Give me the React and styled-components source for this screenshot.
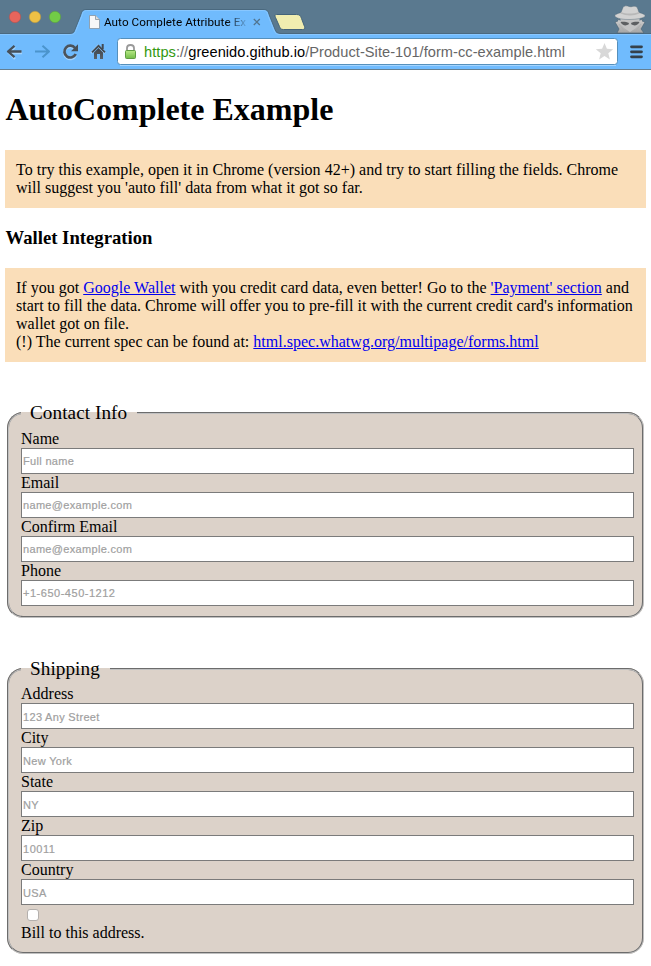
import React from "react";
import styled, { createGlobalStyle } from "styled-components";

const Global = createGlobalStyle`
  * { box-sizing: border-box; }
  html, body { margin: 0; background: #fff; }
  body { width: 651px; height: 966px; overflow: hidden; color: #000; font: 16px/18px "Liberation Serif", "Times New Roman", serif; }
`;

const BrowserBar = styled.header`
  position: relative;
  height: 70px;
  font-family: "Liberation Sans", Arial, sans-serif;
`;
const Artwork = styled.svg`
  position: absolute;
  inset: 0;
  display: block;
`;
const TabRow = styled.div`
  position: relative;
  height: 34px;
  padding: 13px 0 0 104px;
`;
const TabTitle = styled.div`
  width: 145px;
  height: 18px;
  overflow: hidden;
  white-space: nowrap;
  font: 11.7px/18px Roboto, "Liberation Sans", sans-serif;
  letter-spacing: 0.06px;
  mask-image: linear-gradient(90deg, #000 84%, transparent 100%);
`;
const AddressRow = styled.div`
  position: relative;
  height: 36px;
  padding: 8px 0 0 144px;
`;
const Url = styled.div`
  font-size: 14.6px;
  line-height: 20px;
  letter-spacing: 0.05px;
  white-space: nowrap;
  color: #666;
`;
const Secure = styled.span`color: #32980f;`;
const Host = styled.span`color: #000;`;

const Page = styled.main`padding: 0 5px;`;
const Title = styled.h1`
  margin: 0;
  padding: 21px 0 0 0.4px;
  height: 80px;
  font-size: 32px;
  line-height: 37px;
`;
const Note = styled.p`
  margin: 0;
  padding: 11px;
  height: ${(p) => p.$height}px;
  background: #fadeb9;
  white-space: nowrap;
  letter-spacing: 0.01px;
  a { color: #0000ee; text-decoration: underline; }
`;
const Subtitle = styled.h2`
  margin: 0;
  height: 60px;
  padding: 19px 0 0 0.5px;
  font-size: 18.72px;
  line-height: 22px;
`;
const Group = styled.fieldset`
  margin: 40px 2px 0;
  padding: ${(p) => p.$top}px 8px 10px 12px;
  height: ${(p) => p.$height}px;
  min-width: 0;
  border: 2px groove #c0c0c0;
  border-radius: 16px;
  background: #dcd2c9;
`;
const Legend = styled.legend`
  padding: 0 10px 0 9px;
  font-size: 19.2px;
  line-height: 22px;
  letter-spacing: 0.06px;
`;
const FieldLabel = styled.label`
  display: block;
  height: 18px;
`;
const Field = styled.input`
  display: block;
  width: 100%;
  height: 26px;
  margin: 0;
  padding: ${(p) => (p.$low ? "2px 1px 1px" : "0 1px 1px")};
  border: 1px solid #7b7b7b;
  border-radius: 0;
  background: #fff;
  font: 11px "Liberation Sans", Arial, sans-serif;
  letter-spacing: ${(p) => (/^[+\d]+[-\d]+$/.test(p.placeholder) ? 0.52 : 0.32)}px;
  &::placeholder { color: #a0a0a0; opacity: 1; -webkit-text-stroke: 0.2px #a0a0a0; }
`;
const Check = styled.input`
  appearance: none;
  display: block;
  width: 12px;
  height: 12px;
  margin: 4px 0 3px 6px;
  border: 1px solid #b4b0ad;
  border-radius: 3px;
  background: #fff;
`;

const CONTACT = [["Name", "Full name"], ["Email", "name@example.com"], ["Confirm Email", "name@example.com"], ["Phone", "+1-650-450-1212"]];
const SHIPPING = [["Address", "123 Any Street"], ["City", "New York"], ["State", "NY"], ["Zip", "10011"], ["Country", "USA"]];

function Fields({ items, low = false }) {
  return items.map(([label, hint]) => (
    <React.Fragment key={label}>
      <FieldLabel htmlFor={label}>{label}</FieldLabel>
      <Field id={label} placeholder={hint} $low={low} />
    </React.Fragment>
  ));
}

function BrowserArtwork() {
  return (
    <Artwork width="651" height="70" viewBox="0 0 651 70" aria-hidden="true">
      <defs>
        <linearGradient id="lock" x2="0" y2="1"><stop stopColor="#b8e986" /><stop offset="1" stopColor="#72bd48" /></linearGradient>
        <linearGradient id="coat" x2="0" y2="1"><stop stopColor="#d0d0d0" /><stop offset="1" stopColor="#a5a5a5" /></linearGradient>
        <linearGradient id="ink" x2="0" y2="1"><stop stopColor="#3d444b" /><stop offset="1" stopColor="#59626a" /></linearGradient>
      </defs>
      <path fill="#5a798f" d="M0 0h651v34H0z" />
      <path fill="#70bbfd" d="M0 34h651v35H0z" />
      <path fill="#70bbfd" d="M69 34c4 0 5-1 6-4l6-15c1-4 2-5 6-5h176c4 0 5 1 6 5l6 15c1 3 3 4 6 4z" />
      <path fill="none" stroke="#466479" strokeOpacity=".75" d="M0 33.5h69c4 0 5-1 6-4l6-15c1-4 2-5 6-5h176c4 0 5 1 6 5l6 15c1 3 3 4 6 4h370" />
      <path fill="none" stroke="#88c7ff" d="M0 34.5h70c4 0 5-1 6-4l6-15c1-4 2-5 6-5h174c4 0 5 1 6 5l6 15c1 3 3 4 6 4h371" />
      <path stroke="#657f91" d="M0 69.5h651" />
      <circle cx="15" cy="17" r="5.7" fill="#e6655c" stroke="#b65250" strokeWidth=".6" />
      <circle cx="35" cy="17" r="5.7" fill="#edc045" stroke="#b89a43" strokeWidth=".6" />
      <circle cx="55" cy="17" r="5.7" fill="#72cc46" stroke="#5a9d43" strokeWidth=".6" />
      <path fill="#f7f7f7" stroke="#8794a0" strokeWidth=".8" d="M89.5 15.5h6l4 4v9h-10z" />
      <path fill="#dedede" stroke="#8794a0" strokeWidth=".8" d="M95.5 15.5v4h4" />
      <path stroke="#51748f" strokeWidth="1.3" d="m253.8 19 6 6m0-6-6 6" />
      <path fill="#f0edb0" stroke="#43637a" d="M276.5 14.5h20c3 0 4 1 5 4l3 8c.8 2 0 3-2 3h-19c-3 0-3-1-4-3l-4-9c-1-2-.5-3 1-3z" />
      <path fill="none" stroke="#a2d3ff" strokeWidth="2.4" d="M22 53H9m6-6-6 6 6 6M75 49.5a6 6 0 1 0 .7 6M91 53l7-7 7 7" />
      <path fill="none" stroke="#45505a" strokeWidth="2.3" strokeLinejoin="round" d="M21.5 51.5H8.5m6-5.7L8 51.5l6.5 5.7" />
      <path fill="none" stroke="#4b94cc" strokeWidth="2" strokeLinejoin="round" d="M35 51.5h13.5m-6-5.7 6.5 5.7-6.5 5.7" />
      <path fill="none" stroke="#4b535b" strokeWidth="2.7" d="M75 48a5.9 5.9 0 1 0 .7 6" />
      <path fill="#45505a" d="M78 44.3v7h-7z" />
      <path fill="url(#ink)" d="M94 52.5 98.5 48l4.5 4.5V59h-3v-5h-3v5h-3z" />
      <path fill="none" stroke="#424a52" strokeWidth="1.9" d="m92 52.3 6.5-6.5 6.5 6.5" />
      <path fill="#424a52" d="M101.7 44h2v5h-2z" />
      <rect x="117.5" y="38.5" width="500" height="26" rx="3" fill="#fff" stroke="#5590bc" />
      <path stroke="#a5d5ff" d="M120 65.5h496" />
      <path fill="none" stroke="#999" strokeWidth="1.8" d="M127 51v-3c0-4 7-4 7 0v3" />
      <rect x="125.5" y="50.5" width="10" height="8" rx="1" fill="url(#lock)" stroke="#609d42" />
      <path fill="#d8d8d8" d="m604.5 43 2.4 5.8 6.3.4-4.9 4 1.6 6.2-5.4-3.4-5.4 3.4 1.6-6.2-4.9-4 6.3-.4z" />
      <path stroke="#35414b" strokeWidth="2.8" strokeLinecap="round" d="M631.5 46.8h10m-10 5h10m-10 5h10" />
      <path fill="url(#coat)" stroke="#465f70" strokeWidth=".6" d="m617 33 2-4-4-7 3-1-1-2 6 2h14l6-2-1 2 3 1-4 7 3 4z" />
      <path fill="#c3c3c3" d="M620 16h20l-1 8-3 4-6 4-6-4-3-4z" />
      <path fill="#d2d2d2" stroke="#4d6372" strokeWidth=".4" d="M615 16.5c-1-2 3-3 6-4l2-5c1-2 4-2 6-1 3 1 4-1 7 0 2 1 2 4 3 6 3 1 7 2 6 4-4 3.5-26 4.5-30 0z" />
      <path fill="#b8b8b8" d="M621 12c5 2 12 2 18 0l.5 1.5c-6 2.5-13 2.5-19 0z" />
      <path fill="#5d5f61" d="M620.5 22c3-.6 6 0 8.5 1l-.5 1.6-3 .8c-2 0-4-1-5-3.4zm10.5 1c2-1 5-1.6 8.5-1-1 2.4-3 3.4-5 3.4l-3-.8z" />
      <path fill="none" stroke="#aaa" strokeWidth=".7" d="m619 24 6 8m16-8-6 8" />
    </Artwork>
  );
}

export default function App() {
  return (
    <>
      <Global />
      <BrowserBar>
        <BrowserArtwork />
        <TabRow><TabTitle>Auto Complete Attribute Ex</TabTitle></TabRow>
        <AddressRow><Url><Secure>https</Secure>://<Host>greenido.github.io</Host>/Product-Site-101/form-cc-example.html</Url></AddressRow>
      </BrowserBar>
      <Page>
        <Title>AutoComplete Example</Title>
        <Note $height={58}>To try this example, open it in Chrome (version 42+) and try to start filling the fields. Chrome<br />will suggest you 'auto fill' data from what it got so far.</Note>
        <Subtitle>Wallet Integration</Subtitle>
        <Note $height={94}>If you got <a href="#wallet">Google Wallet</a> with you credit card data, even better! Go to the <a href="#payment">'Payment' section</a> and<br />start to fill the data. Chrome will offer you to pre-fill it with the current credit card's information<br />wallet got on file.<br />(!) The current spec can be found at: <a href="#spec">html.spec.whatwg.org/multipage/forms.html</a></Note>
        <Group $top={6} $height={216}>
          <Legend>Contact Info</Legend>
          <Fields items={CONTACT} />
        </Group>
        <Group $top={5} $height={296}>
          <Legend>Shipping</Legend>
          <Fields items={SHIPPING} low />
          <Check id="bill" type="checkbox" />
          <FieldLabel htmlFor="bill">Bill to this address.</FieldLabel>
        </Group>
      </Page>
    </>
  );
}
